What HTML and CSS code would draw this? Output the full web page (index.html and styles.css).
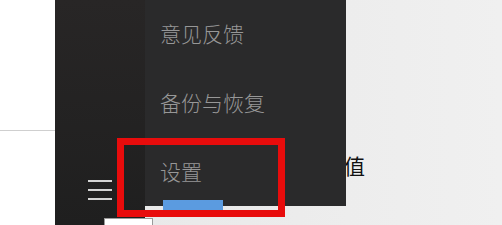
FILE: index.html
```html
<!DOCTYPE html>
<html lang="zh-CN">
<head>
  <meta charset="UTF-8">
  <title>设置</title>
  <link rel="stylesheet" href="styles.css">
</head>
<body>

  <div id="root">

    <div class="page-edge">
      <div class="page-edge-top"></div>
    </div>

    <aside class="rail">
      <button class="rail-toggle" aria-label="菜单">
        <span></span>
        <span></span>
        <span></span>
      </button>
    </aside>

    <main class="content">
      <p class="content-text">默认值</p>

      <ul class="menu">
        <li class="menu-item">意见反馈</li>
        <li class="menu-item">备份与恢复</li>
        <li class="menu-item">设置</li>
      </ul>

      <div class="menu-indicator"></div>
    </main>

    <div class="highlight"></div>
    <div class="tip-box"></div>

  </div>

</body>
</html>
```

FILE: styles.css
```css
html,
body {
  margin: 0;
  padding: 0
}

body {
  font-family: "Noto Sans CJK SC", "Noto Sans", sans-serif;
  font-size: 16px;
  width: 502px;
  height: 225px;
  overflow: hidden
}

#root {
  position: relative;
  display: flex;
  height: 225px
}

.page-edge {
  width: 55px;
  background: #fff
}

.page-edge-top {
  height: 130px;
  border-bottom: 1px solid #cfcfcf
}

.rail {
  width: 90px;
  display: flex;
  flex-direction: column;
  justify-content: flex-end;
  align-items: flex-start;
  background: linear-gradient(to bottom, #282626, #1f1f1f)
}

.rail-toggle {
  display: flex;
  flex-direction: column;
  gap: 7px;
  width: 24px;
  margin: 0 0 25px 33px;
  padding: 0;
  border: 0;
  background: none
}

.rail-toggle span {
  display: block;
  height: 2px;
  background: #d4d4d4
}

.content {
  position: relative;
  flex-grow: 1;
  background: linear-gradient(to right, #e9e9e9, #f0f0f0)
}

.content-text {
  margin: 0;
  padding: 153px 0 0 157px;
  font-size: 21px;
  line-height: 24px;
  color: #111
}

.menu {
  position: absolute;
  top: 0;
  left: 0;
  width: 201px;
  height: 206px;
  margin: 0;
  padding: 0;
  list-style: none;
  background: #2a2a2b
}

.menu-item {
  height: 69px;
  line-height: 66px;
  padding-left: 15px;
  font-size: 21px;
  font-weight: 300;
  color: #979797
}

.menu-indicator {
  position: absolute;
  top: 200px;
  left: 18px;
  width: 60px;
  height: 11px;
  background: #5b9be0
}

.highlight {
  position: absolute;
  top: 138px;
  left: 117px;
  width: 154px;
  height: 65px;
  border: 7px solid #e80c0c
}

.tip-box {
  position: absolute;
  top: 218px;
  left: 104px;
  width: 47px;
  height: 12px;
  background: #fff;
  border: 1px solid #9a9a9a
}
```
